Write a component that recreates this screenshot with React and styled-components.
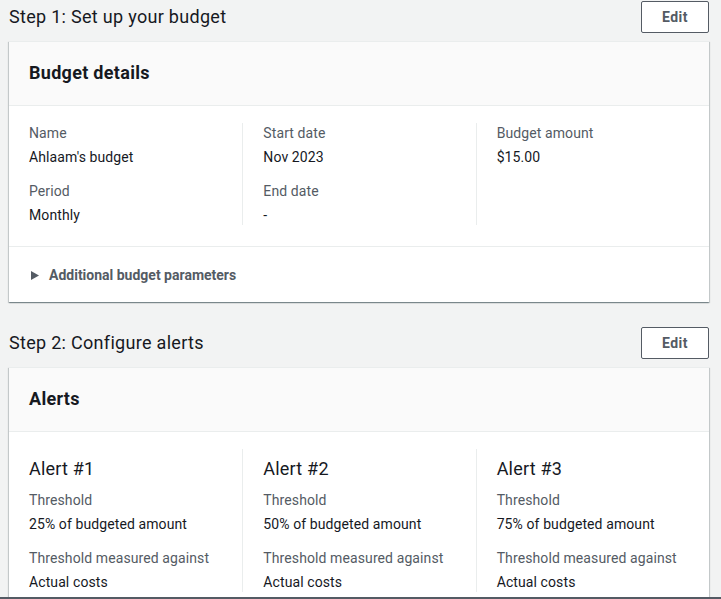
import React from 'react'
import styled, { createGlobalStyle } from 'styled-components'

const GlobalStyle = createGlobalStyle`
    html, body {
        margin: 0;
        padding: 0;
        background: #f2f3f3;
    }
    body {
        font-family: Roboto, "Liberation Sans", Arial, sans-serif;
        color: #16191f;
        -webkit-font-smoothing: antialiased;
    }
`

const Viewport = styled.div`
    height: 599px;
    overflow: hidden;
    box-sizing: border-box;
    border-bottom: 2px solid #545b64;
`

const Page = styled.div`
    width: 700px;
    padding: 1px 0 0 9px;
    display: flex;
    flex-direction: column;
`

const Step = styled.section`
    display: flex;
    flex-direction: column;
    gap: 8px;
    margin-bottom: ${(p) => p.$last ? 0 : 25}px;
`

const StepHeader = styled.div`
    display: flex;
    align-items: center;
    justify-content: space-between;
    height: 32px;
`

const StepTitle = styled.h2`
    margin: 0;
    font-size: 18px;
    line-height: 22px;
    font-weight: 400;
    letter-spacing: 0.3px;
    color: #16191f;
`

const EditButton = styled.button`
    width: 68px;
    height: 32px;
    box-sizing: border-box;
    border: 1px solid #545b64;
    border-radius: 2px;
    background: #ffffff;
    color: #545b64;
    font-family: inherit;
    font-size: 14px;
    font-weight: 700;
    letter-spacing: 0.5px;
    cursor: pointer;
`

const Card = styled.div`
    background: #ffffff;
    border-top: 1px solid #eaeded;
    box-shadow: 0 1px 1px 0 rgba(0, 28, 36, 0.3), 1px 1px 1px 0 rgba(0, 28, 36, 0.15), -1px 1px 1px 0 rgba(0, 28, 36, 0.15);
`

const CardHeader = styled.div`
    background: #fafafa;
    padding: 20px 20px 21px;
    border-bottom: 1px solid #eaeded;
`

const CardTitle = styled.h2`
    margin: 0;
    font-size: 18px;
    line-height: 22px;
    font-weight: 700;
    letter-spacing: 0.3px;
    color: #16191f;
`

const CardBody = styled.div`
    padding: 17px 0 21px;
    display: grid;
    grid-template-columns: repeat(3, 1fr);
`

const Column = styled.div`
    padding: 0 20px;
    display: flex;
    flex-direction: column;
    gap: 14px;
    border-left: ${(p) => p.$first ? 'none' : '1px solid #eaeded'};
`

const Field = styled.div`
    display: flex;
    flex-direction: column;
    gap: 4px;
`

const Label = styled.div`
    font-size: 14px;
    line-height: 20px;
    color: #545b64;
    letter-spacing: 0.1px;
`

const Value = styled.div`
    font-size: 14px;
    line-height: 20px;
    color: #16191f;
    letter-spacing: 0.1px;
`

const AlertTitle = styled.h3`
    margin: 8px 0 -5px;
    font-size: 18px;
    line-height: 24px;
    font-weight: 400;
    letter-spacing: 0.2px;
    color: #16191f;
`

const CardFooter = styled.div`
    border-top: 1px solid #eaeded;
    padding: 18px 20px 17px 22px;
    display: flex;
    align-items: center;
    gap: 10px;
    font-size: 14px;
    line-height: 20px;
    font-weight: 700;
    color: #545b64;
`

const Caret = () => (
    <svg width="8" height="9" viewBox="0 0 8 9">
        <polygon points="0,0 8,4.5 0,9" fill="#545b64" />
    </svg>
)

const budgetColumns = [
    [{ label: 'Name', value: "Ahlaam's budget" }, { label: 'Period', value: 'Monthly' }],
    [{ label: 'Start date', value: 'Nov 2023' }, { label: 'End date', value: '-' }],
    [{ label: 'Budget amount', value: '$15.00' }],
]

const alerts = [
    { id: 1, threshold: '25% of budgeted amount' },
    { id: 2, threshold: '50% of budgeted amount' },
    { id: 3, threshold: '75% of budgeted amount' },
]

const App = () => {
    return (
        <Viewport>
            <GlobalStyle />
            <Page>
                <Step>
                    <StepHeader>
                        <StepTitle>Step 1: Set up your budget</StepTitle>
                        <EditButton>Edit</EditButton>
                    </StepHeader>
                    <Card>
                        <CardHeader>
                            <CardTitle>Budget details</CardTitle>
                        </CardHeader>
                        <CardBody>
                            {
                                budgetColumns.map((fields, i) => (
                                    <Column key={`col-${i}`} $first={i === 0}>
                                        {
                                            fields.map((f) => (
                                                <Field key={f.label}>
                                                    <Label>{f.label}</Label>
                                                    <Value>{f.value}</Value>
                                                </Field>
                                            ))
                                        }
                                    </Column>
                                ))
                            }
                        </CardBody>
                        <CardFooter>
                            <Caret />
                            Additional budget parameters
                        </CardFooter>
                    </Card>
                </Step>

                <Step $last>
                    <StepHeader>
                        <StepTitle>Step 2: Configure alerts</StepTitle>
                        <EditButton>Edit</EditButton>
                    </StepHeader>
                    <Card>
                        <CardHeader>
                            <CardTitle>Alerts</CardTitle>
                        </CardHeader>
                        <CardBody>
                            {
                                alerts.map((a, i) => (
                                    <Column key={`alert-${a.id}`} $first={i === 0}>
                                        <AlertTitle>Alert #{a.id}</AlertTitle>
                                        <Field>
                                            <Label>Threshold</Label>
                                            <Value>{a.threshold}</Value>
                                        </Field>
                                        <Field>
                                            <Label>Threshold measured against</Label>
                                            <Value>Actual costs</Value>
                                        </Field>
                                    </Column>
                                ))
                            }
                        </CardBody>
                    </Card>
                </Step>
            </Page>
        </Viewport>
    )
}

export default App
